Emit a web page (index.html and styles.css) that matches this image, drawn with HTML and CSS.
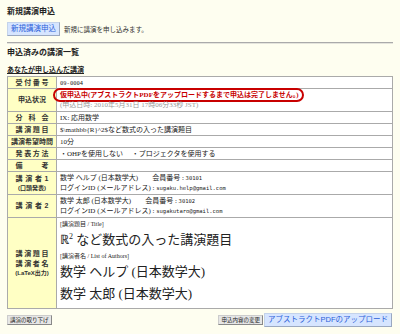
FILE: index.html
```html
<!DOCTYPE html>
<html lang="ja">
<head>
    <meta charset="UTF-8">
    <meta name="viewport" content="width=device-width, initial-scale=1.0">
    <title>講演申込</title>
    <link rel="stylesheet" href="styles.css">
</head>
<body>

    <h2 class="sec-title">新規講演申込</h2>
    <div class="new-row">
        <button class="btn-blue">新規講演申込</button>
        <span class="note">新規に講演を申し込みます。</span>
    </div>
    <hr class="rule">

    <h2 class="sec-title">申込済みの講演一覧</h2>
    <h3 class="sub-title">あなたが申し込んだ講演</h3>

    <table class="talk">
        <tr>
            <th><span class="jt">受付番号</span></th>
            <td><span class="mono">09-0004</span></td>
        </tr>
        <tr class="two">
            <th>申込状況</th>
            <td>
                <span class="warn">仮申込中(アブストラクトPDFをアップロードするまで申込は完了しません。)</span><br>
                <span class="date">(申込日時: 2010年5月31日 17時06分33秒 JST)</span>
            </td>
        </tr>
        <tr>
            <th><span class="jt">分科会</span></th>
            <td>IX: 応用数学</td>
        </tr>
        <tr>
            <th><span class="jt">講演題目</span></th>
            <td>$\mathbb{R}^2$など数式の入った講演題目</td>
        </tr>
        <tr>
            <th>講演希望時間</th>
            <td>10分</td>
        </tr>
        <tr>
            <th><span class="jt">発表方法</span></th>
            <td>・OHPを使用しない　&nbsp;・プロジェクタを使用する</td>
        </tr>
        <tr>
            <th><span class="jt">備考</span></th>
            <td></td>
        </tr>
        <tr class="two">
            <th><span class="jt">講演者1</span><span class="small">(口頭発表)</span></th>
            <td>
                数学 ヘルプ (日本数学大)　　会員番号 : <span class="mono">30101</span><br>
                ログインID (メールアドレス) : <span class="mono">sugaku.help@gmail.com</span>
            </td>
        </tr>
        <tr class="two">
            <th><span class="jt">講演者2</span></th>
            <td>
                数学 太郎 (日本数学大)　　会員番号 : <span class="mono">30102</span><br>
                ログインID (メールアドレス) : <span class="mono">sugakutaro@gmail.com</span>
            </td>
        </tr>
        <tr>
            <th>
                <span class="jt">講演題目</span>
                <span class="jt">講演者名</span>
                <span class="small">(LaTeX出力)</span>
            </th>
            <td class="latex">
                <div class="tag">[講演題目 / Title]</div>
                <div class="big">ℝ<sup>2</sup> など数式の入った講演題目</div>
                <div class="tag">[講演者名 / List of Authors]</div>
                <div class="big">数学 ヘルプ (日本数学大)</div>
                <div class="big">数学 太郎 (日本数学大)</div>
            </td>
        </tr>
    </table>

    <div class="actions">
        <button class="btn-gray">講演の取り下げ</button>
        <div class="right">
            <button class="btn-gray">申込内容の変更</button>
            <button class="btn-blue">アブストラクトPDFのアップロード</button>
        </div>
    </div>

</body>
</html>
```

FILE: styles.css
```css
body {
    font-family: "Liberation Serif", "Noto Sans CJK JP", serif;
    margin: 0;
    padding: 6px 7px;
    background-color: #fefef0;
    color: #222;
}
.sec-title {
    font-family: "Liberation Sans", "Noto Sans CJK JP", sans-serif;
    font-size: 8px;
    line-height: 12px;
    font-weight: bold;
    margin: 0;
}
.sub-title {
    font-family: "Liberation Sans", "Noto Sans CJK JP", sans-serif;
    font-size: 7px;
    line-height: 10px;
    font-weight: bold;
    text-decoration: underline;
    margin: 6px 0 1px;
}
.new-row {
    display: flex;
    align-items: center;
    gap: 4px;
    margin-top: 4px;
}
.note {
    font-size: 6.5px;
    color: #333;
}
.rule {
    border: none;
    border-top: 1px solid #aaa;
    border-bottom: 1px solid #e4e4dc;
    margin: 6px 0 3px;
}
button {
    font-family: "Liberation Sans", "Noto Sans CJK JP", sans-serif;
    cursor: pointer;
    margin: 0;
}
.btn-blue {
    background-color: #d6e5ff;
    color: #2b5fd9;
    font-size: 7.5px;
    line-height: 12px;
    padding: 0 3px;
    border: 1px solid #c4d3ea;
    border-right-color: #9aa8c0;
    border-bottom-color: #9aa8c0;
}
.btn-gray {
    background-color: #e6e6e6;
    color: #222;
    font-size: 5.5px;
    line-height: 8px;
    padding: 0 2px;
    border: 1px solid #ccc;
    border-right-color: #888;
    border-bottom-color: #888;
}
.talk {
    width: 100%;
    border-collapse: collapse;
    border: 1px solid #777;
    background: white;
    font-size: 7px;
    line-height: 10px;
}
.talk th, .talk td {
    border: 1px solid #aaa;
    padding: 0.5px 3px;
}
.talk .two th, .talk .two td {
    padding-top: 1px;
    padding-bottom: 1px;
}
.talk th {
    width: 40px;
    background-color: #ffffc4;
    font-family: "Liberation Sans", "Noto Sans CJK JP", sans-serif;
    font-weight: bold;
    color: #333;
    text-align: center;
    white-space: nowrap;
}
.jt {
    display: block;
    width: 33px;
    margin: 0 auto;
    text-align: justify;
    text-align-last: justify;
}
.small {
    display: block;
    font-size: 6px;
    line-height: 8px;
}
.mono {
    font-family: "DejaVu Sans Mono", monospace;
    font-size: 5.5px;
}
.warn {
    color: #c80000;
    font-weight: bold;
    border: 2px solid #c80000;
    border-radius: 9px;
    margin-left: -7px;
    padding: 1px 3px 1px 5px;
}
.date {
    color: #999;
}
.talk .latex {
    padding-top: 1px;
    padding-bottom: 3px;
}
.tag {
    font-size: 6px;
    line-height: 10px;
}
.big {
    font-size: 13px;
    line-height: 22px;
}
.big sup {
    font-size: 8px;
    line-height: 0;
}
.actions {
    display: flex;
    justify-content: space-between;
    align-items: center;
    margin-top: 4px;
}
.right {
    display: flex;
    align-items: center;
    gap: 1px;
    margin-right: 1px;
}
```
